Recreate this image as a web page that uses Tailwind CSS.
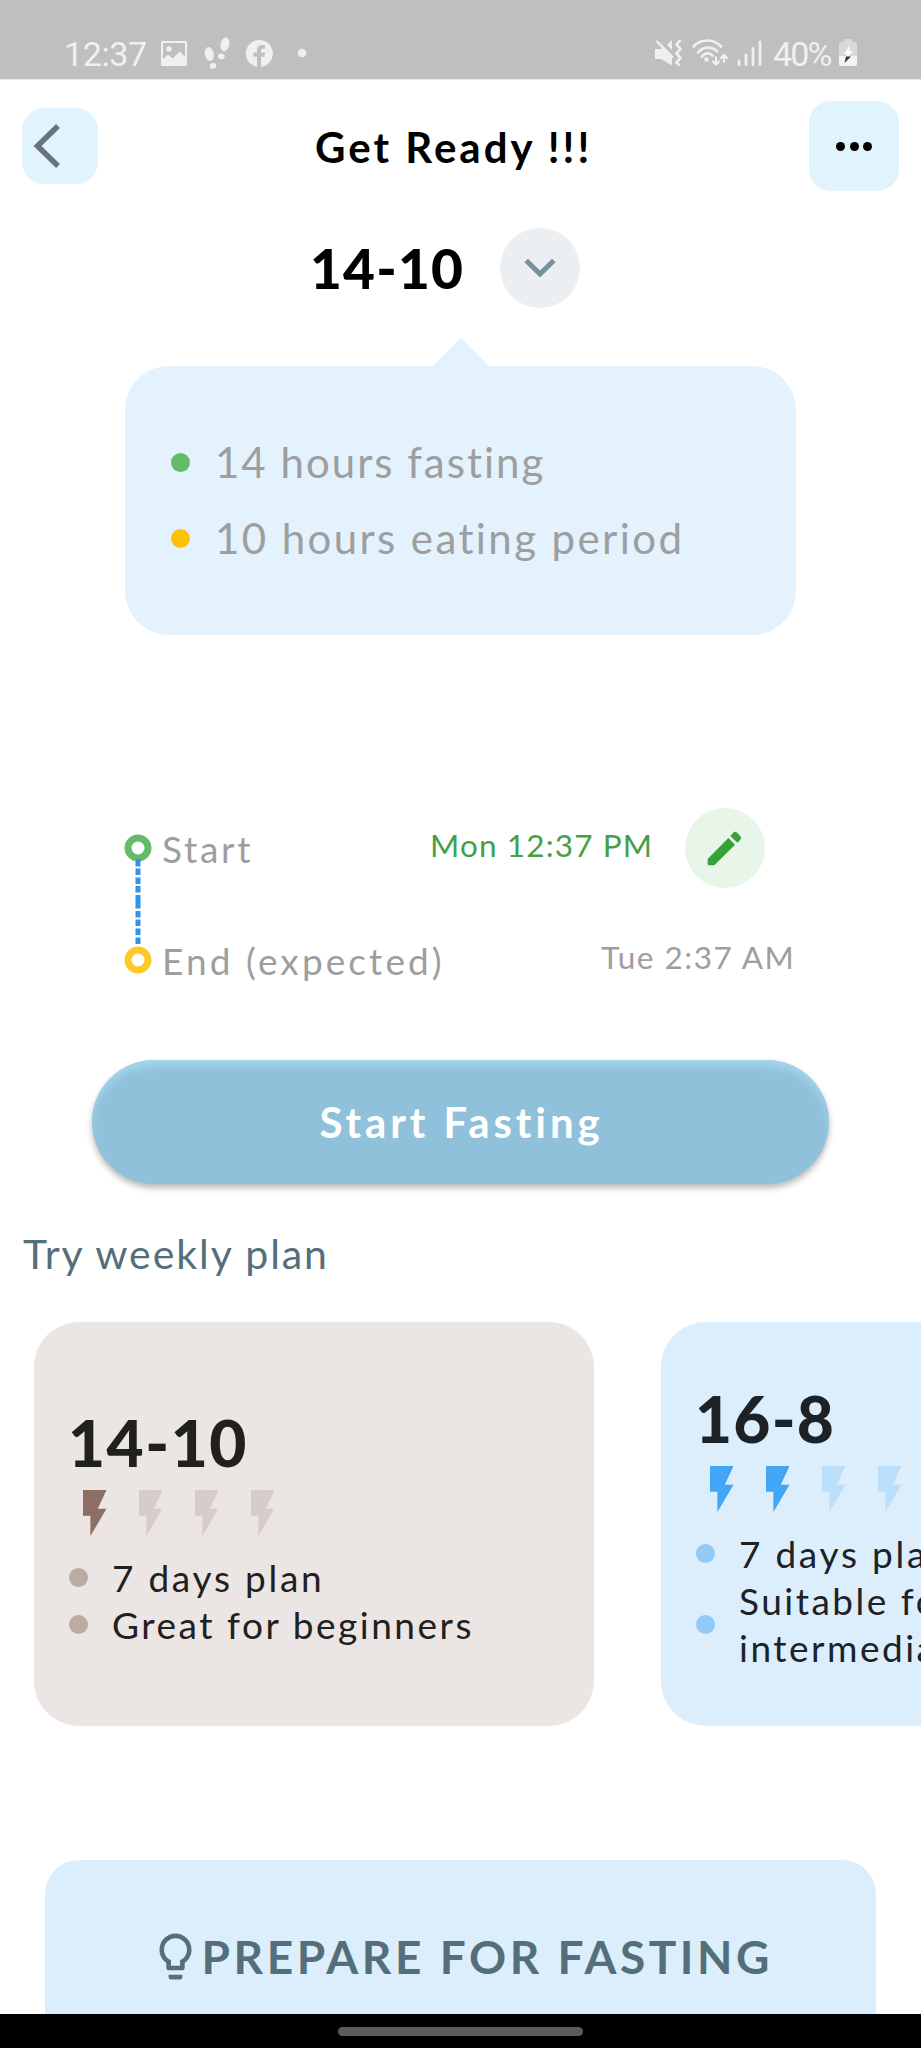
<!DOCTYPE html>
<html lang="en">
<head>
<meta charset="utf-8">
<title>Get Ready</title>
<script src="https://cdn.jsdelivr.net/npm/@tailwindcss/browser@4"></script>
</head>
<body class="bg-white">
<svg class="hidden">
  <symbol id="bolt" viewBox="0 0 23.5 46"><path d="M0 0H23.5L14.8 18.8H23.5L7.4 46V25.8H0Z"/></symbol>
</svg>
<div class="flex h-[2048px] w-[921px] flex-col overflow-hidden bg-white font-['Lato',sans-serif] whitespace-nowrap">

  <!-- Status bar -->
  <header class="flex h-20 shrink-0 items-start border-b border-[#e6e6e6] bg-[#bfbfbf] pl-16 font-['Roboto',sans-serif] text-[34px] text-[#f0f0f0]">
    <span class="mt-[34px] w-24 leading-10 tracking-[-0.4px]">12:37</span>
    <svg class="mt-[33px] h-10 w-[155px]" viewBox="160 33 155 40" fill="#f0f0f0">
      <path fill-rule="evenodd" d="M163 41H185.500Q187 41 187 42.500V64.500Q187 66 185.500 66H162.500Q161 66 161 64.500V42.500Q161 41 162.500 41ZM163 43V59L168 54.500 172.500 58.500 180 51.500 185 57V43Z"/>
      <circle cx="169" cy="49" r="2.700"/>
      <ellipse cx="209.300" cy="54" rx="4.400" ry="7" transform="rotate(-12 209.300 54)"/>
      <ellipse cx="213" cy="66" rx="3.400" ry="2.900" transform="rotate(-15 213 66)"/>
      <ellipse cx="225" cy="44.300" rx="4.400" ry="7" transform="rotate(12 225 44.300)"/>
      <ellipse cx="221.300" cy="56.500" rx="3.400" ry="2.900" transform="rotate(15 221.300 56.500)"/>
      <circle cx="259.300" cy="53.500" r="13.500"/>
      <path d="M257 68V56.800H253.400V52.500H257V50.500C257 46.800 259.200 45 262.500 45H265V48.800H263C261.500 48.800 261 49.600 261 50.800V52.500H265L264.400 56.800H261V68Z" fill="#bfbfbf"/>
      <circle cx="302" cy="53" r="4.300"/>
    </svg>
    <svg class="mt-[33px] ml-[336px] h-10 w-[120px]" viewBox="652 33 120 40" fill="#f0f0f0">
      <path d="M656 49H662L664.500 47 673 55.500V65.500L662 59H656Z"/>
      <path d="M668 45L673 40V50Z"/>
      <path d="M657.500 41L674 57.500" stroke="#f0f0f0" stroke-width="2.400"/>
      <path d="M681.500 40L677.500 44.500 681.500 49 677.500 53.500 681.500 58 677.500 62.500 680.500 65.500" fill="none" stroke="#f0f0f0" stroke-width="2.600"/>
      <g fill="none" stroke="#f0f0f0" stroke-width="2.700" stroke-linecap="round">
        <path d="M694.500 46.500C702 38.500 714.500 38.500 722 46.500M699 52.500C704.500 46 713 46.500 718 51M703 56.500C706 52.500 711 52.500 713.500 55.500"/>
        <path d="M717 57V64M714 61.500L717 64.500 720 61.500M725 62V55.500M722 58L725 55 728 58" stroke-width="2.200"/>
        <path d="M740 61V64.500M747 55V64.500M754 48.500V64.500M761 42V64.500" stroke-width="2.800"/>
      </g>
      <circle cx="707.500" cy="59.500" r="2.200"/>
    </svg>
    <span class="mt-[34px] ml-[2px] w-[65px] leading-10 tracking-[-1.800px]">40%</span>
    <svg class="mt-[33px] h-10 w-6" viewBox="839 33 24 40">
      <path d="M840 56V44Q840 42 842 42H845V39H853V42H856Q858 42 858 44V56Z" fill="#d9d9d9"/>
      <path d="M840 56H858V64Q858 66 856 66H842Q840 66 840 64Z" fill="#f3f3f3"/>
      <path d="M851 45L845 54H848.500L847 58 854 51H850Z" fill="#fff"/>
      <path d="M847 56.500H852L845.500 63Z" fill="#333"/>
    </svg>
  </header>

  <!-- Title bar -->
  <div class="flex h-[132px] shrink-0 items-center px-[22px]">
    <button class="h-[76px] w-[76px] rounded-[22px] bg-[#e1f3fc]">
      <svg class="h-[76px] w-[76px]" viewBox="0 0 76 76" fill="none" stroke="#68737a" stroke-width="5.500"><path d="M36 18L15.500 38 36 58"/></svg>
    </button>
    <h1 class="ml-[217px] pt-0.5 text-[42px] leading-[48px] font-bold tracking-[3px] text-black">Get Ready !!!</h1>
    <button class="ml-auto flex h-[90px] w-[90px] items-center justify-center gap-[4.500px] rounded-[22px] bg-[#e1f3fc]">
      <span class="size-[9px] rounded-full bg-black"></span><span class="size-[9px] rounded-full bg-black"></span><span class="size-[9px] rounded-full bg-black"></span>
    </button>
  </div>

  <!-- Plan selector -->
  <div class="flex h-28 shrink-0 items-center pl-[310px]">
    <span class="w-[190px] text-[55px] leading-[64px] font-black tracking-[1.200px] text-black">14-10</span>
    <button class="flex size-20 items-center justify-center rounded-full bg-[#ebeff2]">
      <svg class="h-5 w-8" viewBox="0 0 32 20" fill="none" stroke="#78909c" stroke-width="5"><path d="M2.200 2.500L16 16 29.800 2.500"/></svg>
    </button>
  </div>

  <!-- Plan description bubble -->
  <section class="mt-3.5 flex shrink-0 flex-col">
    <svg class="h-7 w-14 self-center" viewBox="0 0 56 28" fill="#e3f2fd"><path d="M28 0L56 28H0Z"/></svg>
    <div class="ml-[125px] h-[269px] w-[671px] rounded-[44px] bg-[#e3f2fd] pt-[58px] pl-[46px] text-[42px] text-[#9e9e9e]">
      <div class="flex h-[76px] items-center gap-[25px]"><span class="size-[19px] rounded-full bg-[#66bb6a]"></span><span class="tracking-[2px]">14 hours fasting</span></div>
      <div class="flex h-[76px] items-center gap-[25px]"><span class="size-[19px] rounded-full bg-[#ffc107]"></span><span class="tracking-[2.400px]">10 hours eating period</span></div>
    </div>
  </section>

  <!-- Start and end times -->
  <section class="mt-[157px] flex shrink-0 items-center pl-[124px] text-[#9e9e9e]">
    <svg class="h-[140px] w-7" viewBox="0 0 28 140" fill="none">
      <circle cx="14" cy="14" r="10" stroke="#66bb6a" stroke-width="7"/>
      <path d="M14 25V32.500M14 34.500V41M14 43.500V50M14 52V58.500M14 61V74.500M14 77V83.500M14 85.500V92M14 94.500V101M14 103.500V110" stroke="#2f95ea" stroke-width="5"/>
      <circle cx="14" cy="126" r="10" stroke="#ffca28" stroke-width="7"/>
    </svg>
    <div class="ml-2.5">
      <div class="flex h-28 items-center">
        <span class="w-[268px] pt-0.5 text-[37px] tracking-[2.700px]">Start</span>
        <span class="w-[255px] pb-1 text-[31.500px] tracking-[1.150px] text-[#43a047]">Mon 12:37 PM</span>
        <button class="size-20 rounded-full bg-[#e8f5e9]">
          <svg class="size-20" viewBox="45 37 240 240" fill="#38a038"><path d="M113 190L175 127 195 147 133 209H117Q113 209 113 205ZM181 121L190 111Q195 105 201 111L211 121Q216 127 211 132L202 141Z"/></svg>
        </button>
      </div>
      <div class="flex h-28 items-center">
        <span class="w-[439px] pt-0.5 text-[37px] tracking-[3.100px]">End (expected)</span>
        <span class="pb-1 text-[31.500px] tracking-[1.500px]">Tue 2:37 AM</span>
      </div>
    </div>
  </section>

  <button class="mt-11 ml-[92px] h-[124px] w-[737px] shrink-0 rounded-full bg-[#90c1db] pl-0.5 text-[42px] font-bold tracking-[3.900px] text-white shadow-[0_4px_6px_rgba(0,0,0,0.28),inset_0_8px_8px_-2px_#a4d7ef]">Start Fasting</button>

  <h2 class="mt-[46px] ml-[23px] shrink-0 text-[41px] leading-[48px] tracking-[1.950px] text-[#546e7a]">Try weekly plan</h2>

  <!-- Weekly plans -->
  <section class="mt-11 flex shrink-0 gap-[67px] overflow-hidden pl-[33.500px]">
    <article class="flex h-[404px] w-[560px] shrink-0 flex-col justify-center rounded-[45px] bg-[#ebe6e3] pl-[35.500px] text-[37px] leading-[47px] text-[#20201e]">
      <h3 class="-ml-px text-[64px] leading-[84px] font-black tracking-[1.500px]">14-10</h3>
      <div class="flex h-[69px] gap-[32.500px] pt-[5px] pl-3.5 text-[#d7ccca]">
        <svg class="h-[46px] w-[23.500px] fill-[#8d6e63]"><use href="#bolt"/></svg>
        <svg class="h-[46px] w-[23.500px] fill-current"><use href="#bolt"/></svg>
        <svg class="h-[46px] w-[23.500px] fill-current"><use href="#bolt"/></svg>
        <svg class="h-[46px] w-[23.500px] fill-current"><use href="#bolt"/></svg>
      </div>
      <div class="flex items-center gap-6"><span class="size-[19px] rounded-full bg-[#bcaaa4]"></span><span class="tracking-[2.740px]">7 days plan</span></div>
      <div class="flex items-center gap-6"><span class="size-[19px] rounded-full bg-[#bcaaa4]"></span><span class="tracking-[2.530px]">Great for beginners</span></div>
    </article>
    <article class="flex h-[404px] w-[560px] shrink-0 flex-col justify-center rounded-[45px] bg-[#dceefc] pl-[35.500px] text-[37px] leading-[47px] text-[#1c2226]">
      <h3 class="-ml-px text-[64px] leading-[84px] font-black tracking-[1.200px]">16-8</h3>
      <div class="flex h-[69px] gap-[32.500px] pt-[5px] pl-3.5 text-[#bbdefb]">
        <svg class="h-[46px] w-[23.500px] fill-[#42a5f5]"><use href="#bolt"/></svg>
        <svg class="h-[46px] w-[23.500px] fill-[#42a5f5]"><use href="#bolt"/></svg>
        <svg class="h-[46px] w-[23.500px] fill-current"><use href="#bolt"/></svg>
        <svg class="h-[46px] w-[23.500px] fill-current"><use href="#bolt"/></svg>
      </div>
      <div class="flex items-center gap-6"><span class="size-[19px] rounded-full bg-[#90caf9]"></span><span class="tracking-[2.740px]">7 days plan</span></div>
      <div class="flex items-center gap-6"><span class="size-[19px] rounded-full bg-[#90caf9]"></span><span class="tracking-[2.500px]">Suitable for<br>intermediate</span></div>
    </article>
  </section>

  <!-- Preparation card -->
  <section class="mt-[134px] ml-[45px] flex h-[154px] w-[831px] shrink-0 items-start rounded-t-[34px] bg-[#dceefc] pt-[69px] pl-[102.500px] text-[#546e7a]">
    <svg class="size-[55px] shrink-0" viewBox="0 0 24 24" fill="currentColor"><path d="M12 2A7 7 0 0 1 19 9C19 11.380 17.810 13.470 16 14.740V17A1 1 0 0 1 15 18H9A1 1 0 0 1 8 17V14.740C6.190 13.470 5 11.380 5 9A7 7 0 0 1 12 2M9 21V20H15V21A1 1 0 0 1 14 22H10A1 1 0 0 1 9 21M12 4A5 5 0 0 0 7 9C7 11.050 8.230 12.810 10 13.580V16H14V13.580C15.770 12.810 17 11.050 17 9A5 5 0 0 0 12 4Z"/></svg>
    <h2 class="-ml-px text-[46px] leading-[56px] font-bold tracking-[3.550px]">PREPARE FOR FASTING</h2>
  </section>

  <!-- Gesture bar -->
  <footer class="flex h-[34px] shrink-0 justify-center bg-black pt-[13px]">
    <span class="h-[9px] w-[245px] rounded-full bg-[#5b5b5b]"></span>
  </footer>
</div>
</body>
</html>
